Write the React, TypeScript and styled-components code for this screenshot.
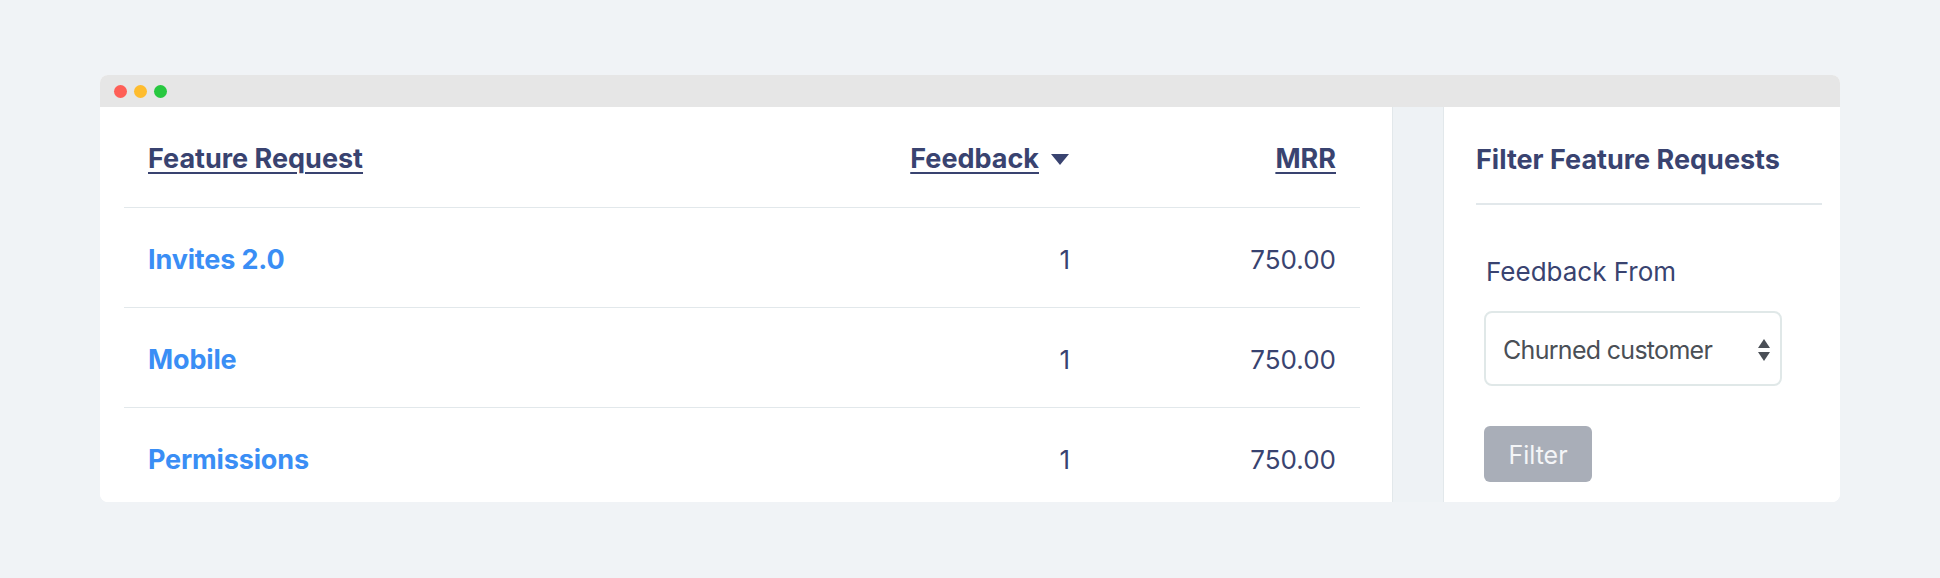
import React from "react";
import styled, { createGlobalStyle } from "styled-components";

const Global = createGlobalStyle`
  html, body { margin: 0; padding: 0; background: #f0f3f6; }
  body { font-family: Inter, "Noto Sans", sans-serif; -webkit-font-smoothing: antialiased; }
  * { box-sizing: border-box; }
`;

const Page = styled.div`
  width: 1940px;
  height: 578px;
  padding: 75px 100px 0 100px;
  background: #f0f3f6;
`;

const Window = styled.div`
  width: 1740px;
  height: 427px;
  border-radius: 8px;
  overflow: hidden;
  background: #ffffff;
  display: flex;
  flex-direction: column;
`;

const TitleBar = styled.div`
  height: 32px;
  flex: none;
  background: #e6e6e6;
  display: flex;
  align-items: center;
  gap: 7px;
  padding-left: 14px;
`;

const Dot = styled.span<{ $color: string }>`
  width: 13px;
  height: 13px;
  border-radius: 50%;
  background: ${(p) => p.$color};
`;

const Body = styled.div`
  flex: 1;
  display: flex;
  min-height: 0;
`;

const Main = styled.div`
  width: 1293px;
  flex: none;
  padding: 0 32px 0 24px;
  border-right: 1px solid #e2e8eb;
  background: #ffffff;
`;

const Gutter = styled.div`
  width: 50px;
  flex: none;
  background: #eef2f5;
`;

const Sidebar = styled.aside`
  flex: 1;
  border-left: 1px solid #e2e8eb;
  background: #ffffff;
  padding: 0 18px 0 32px;
`;

const Row = styled.div<{ $head?: boolean }>`
  display: grid;
  grid-template-columns: 1fr 200px 266px;
  height: 100px;
  border-top: ${(p) => (p.$head ? "none" : "1px solid #e2e8eb")};
  align-items: center;
`;

const Cell = styled.div<{ $align?: "left" | "right" }>`
  padding: 4px 24px 0 24px;
  display: flex;
  align-items: center;
  justify-content: ${(p) => (p.$align === "right" ? "flex-end" : "flex-start")};
  font-size: 27px;
  line-height: 34px;
  color: #394370;
`;

const HeadLink = styled.a`
  color: #394370;
  font-weight: 700;
  text-decoration: underline;
  text-decoration-thickness: 2px;
  text-underline-offset: 4px;
`;

const Caret = styled.svg`
  flex: none;
  width: 18px;
  height: 11px;
  margin-left: 12px;
  margin-right: 1px;
  margin-top: 1px;
`;

const ItemLink = styled.a`
  color: #3a8ef5;
  font-weight: 700;
  text-decoration: none;
  letter-spacing: -0.15px;
`;

const Num = styled.span`
  color: #394370;
  font-weight: 400;
  font-size: 26px;
`;

const SideHead = styled.div`
  height: 98px;
  border-bottom: 2px solid #e2e8eb;
  display: flex;
  align-items: center;
  padding-top: 8px;
`;

const SideTitle = styled.h2`
  margin: 0;
  font-size: 27px;
  font-weight: 700;
  color: #394370;
`;

const Form = styled.form`
  padding: 50px 0 0 8px;
  display: flex;
  flex-direction: column;
  align-items: flex-start;
`;

const Label = styled.label`
  font-size: 26px;
  line-height: 34px;
  color: #394370;
  padding-left: 2px;
`;

const SelectBox = styled.div`
  margin-top: 22px;
  width: 298px;
  height: 75px;
  border: 2px solid #e0e8e8;
  border-radius: 8px;
  display: flex;
  align-items: center;
  justify-content: space-between;
  padding: 2px 10px 0 17px;
  font-size: 25px;
  letter-spacing: -0.7px;
  color: #4a4f56;
`;

const Arrows = styled.svg`
  flex: none;
  width: 12px;
  height: 22px;
`;

const Button = styled.button`
  margin-top: 40px;
  width: 108px;
  height: 56px;
  border: none;
  border-radius: 6px;
  background: #a9aeb8;
  color: #f4f5f7;
  font-family: inherit;
  font-size: 25px;
  padding: 2px 0 0 0;
`;

const rows = [
  { name: "Invites 2.0", fb: "1", mrr: "750.00" },
  { name: "Mobile", fb: "1", mrr: "750.00" },
  { name: "Permissions", fb: "1", mrr: "750.00" },
];

export default function App() {
  return (
    <>
      <Global />
      <Page>
        <Window>
          <TitleBar>
            <Dot $color="#fe5f57" />
            <Dot $color="#febc2e" />
            <Dot $color="#28c840" />
          </TitleBar>
          <Body>
            <Main>
              <Row $head>
                <Cell>
                  <HeadLink href="#">Feature Request</HeadLink>
                </Cell>
                <Cell $align="right">
                  <HeadLink href="#">Feedback</HeadLink>
                  <Caret viewBox="0 0 18 11">
                    <path d="M0 0 H18 L9 11 Z" fill="#394370" />
                  </Caret>
                </Cell>
                <Cell $align="right">
                  <HeadLink href="#">MRR</HeadLink>
                </Cell>
              </Row>
              {rows.map((r) => (
                <Row key={r.name}>
                  <Cell>
                    <ItemLink href="#">{r.name}</ItemLink>
                  </Cell>
                  <Cell $align="right">
                    <Num>{r.fb}</Num>
                  </Cell>
                  <Cell $align="right">
                    <Num>{r.mrr}</Num>
                  </Cell>
                </Row>
              ))}
            </Main>
            <Gutter />
            <Sidebar>
              <SideHead>
                <SideTitle>Filter Feature Requests</SideTitle>
              </SideHead>
              <Form onSubmit={(e) => e.preventDefault()}>
                <Label>Feedback From</Label>
                <SelectBox>
                  <span>Churned customer</span>
                  <Arrows viewBox="0 0 12 22">
                    <path d="M6 0 L12 9 H0 Z" fill="#4a4f56" />
                    <path d="M0 13 H12 L6 22 Z" fill="#4a4f56" />
                  </Arrows>
                </SelectBox>
                <Button type="submit">Filter</Button>
              </Form>
            </Sidebar>
          </Body>
        </Window>
      </Page>
    </>
  );
}
